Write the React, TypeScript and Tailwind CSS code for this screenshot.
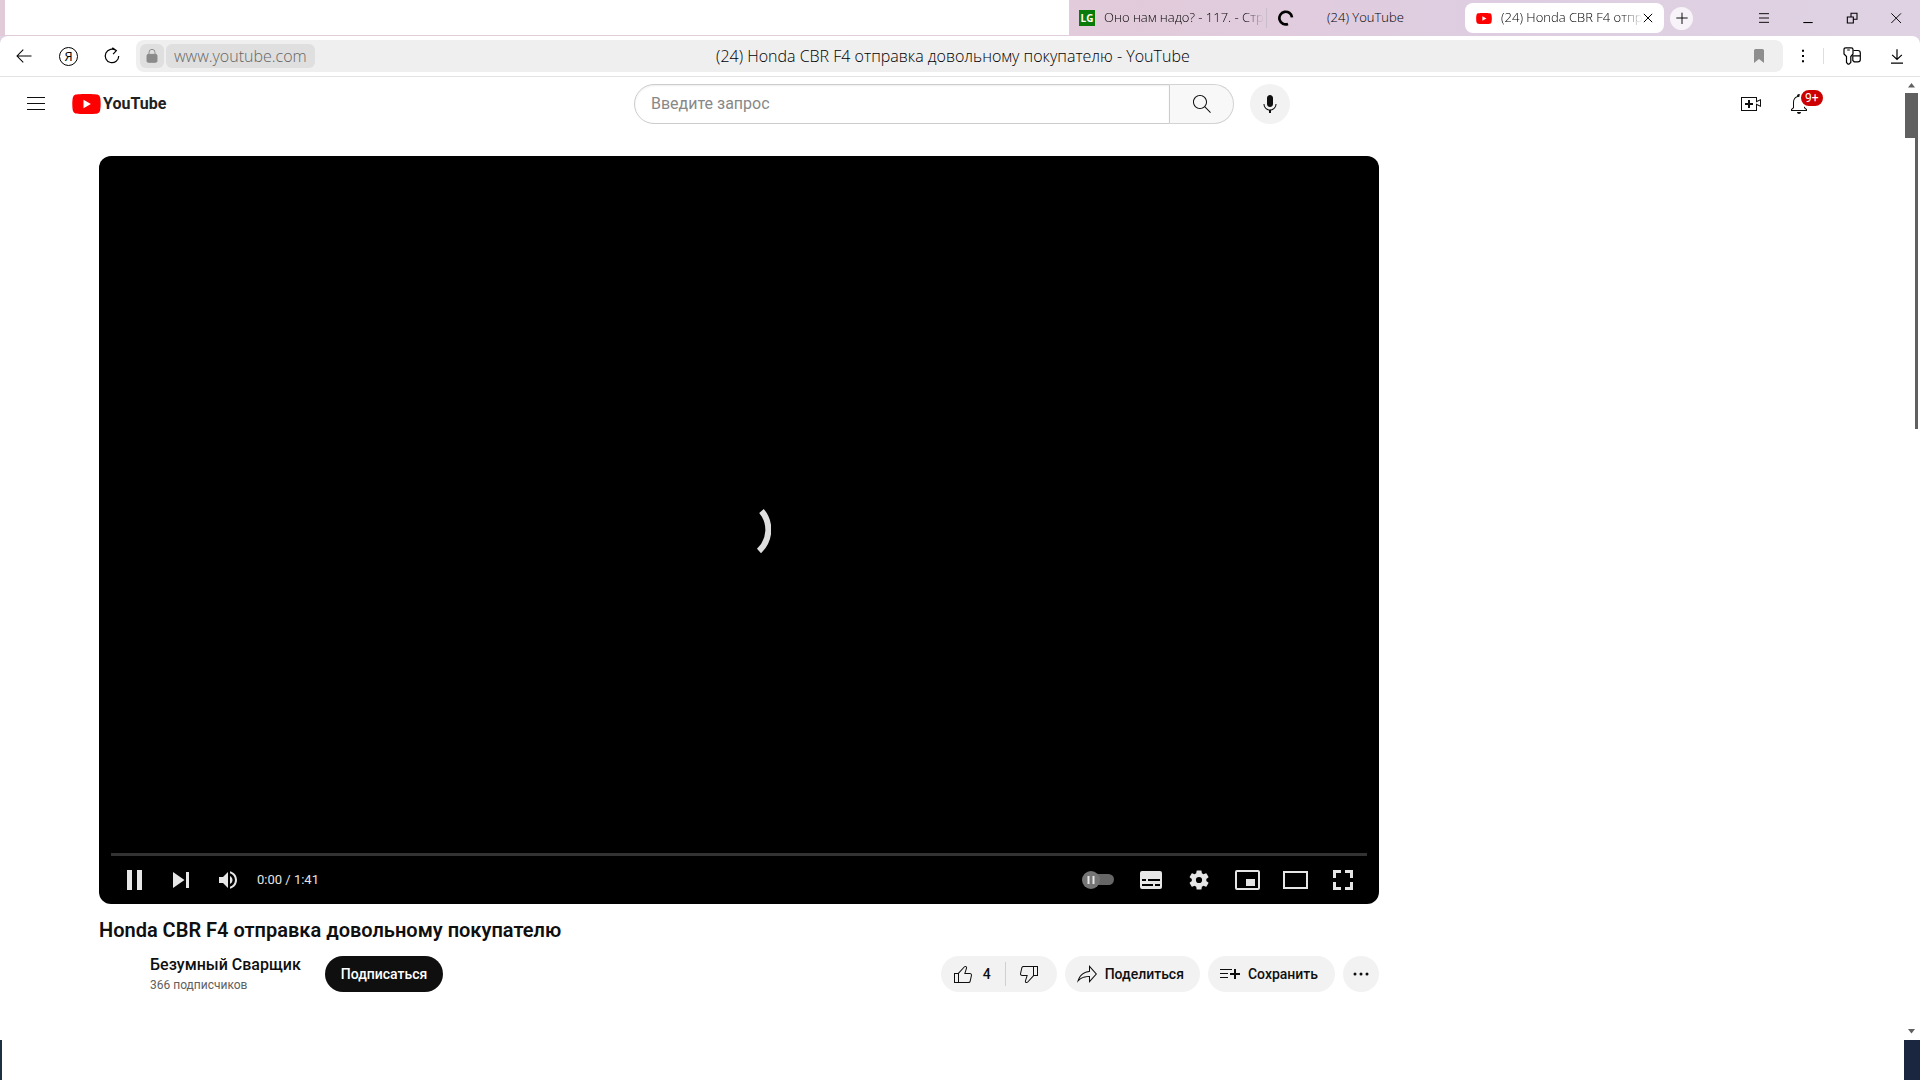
import React from "react";

const UI_FONT = "font-['Open_Sans','Noto_Sans',sans-serif] font-light";
const YT_FONT = "font-['Roboto','Liberation_Sans',sans-serif] font-normal";

const PATHS = {
  menu: "M21,6H3V5h18V6z M21,11H3v1h18V11z M21,17H3v1h18V17z",
  search:
    "M20.87,20.17l-5.59-5.59C16.35,13.35,17,11.75,17,10c0-3.87-3.13-7-7-7s-7,3.13-7,7s3.13,7,7,7c1.75,0,3.35-0.65,4.58-1.71l5.59,5.59L20.87,20.17z M10,16c-3.31,0-6-2.69-6-6s2.69-6,6-6s6,2.69,6,6S13.31,16,10,16z",
  mic: "M12 3C10.34 3 9 4.37 9 6.07V11.93C9 13.63 10.34 15 12 15C13.66 15 15 13.63 15 11.93V6.07C15 4.37 13.66 3 12 3ZM18.5 12H17.5C17.5 15.03 15.03 17.5 12 17.5C8.97 17.5 6.5 15.03 6.5 12H5.5C5.5 15.24 7.89 17.93 11 18.41V21H13V18.41C16.11 17.93 18.5 15.24 18.5 12Z",
  create:
    "M14,13h-3v3H9v-3H6v-2h3V8h2v3h3V13z M17,6H3v12h14v-6.39l4,1.83V8.56l-4,1.83V6 M18,5v3.83L22,7v8l-4-1.83V19H2V5H18L18,5z",
  bell: "M10,20h4c0,1.1-0.9,2-2,2S10,21.1,10,20z M20,17.35V19H4v-1.65l2-1.88v-5.15c0-2.92,1.56-5.22,4-5.98V3.96c0-1.42,1.49-2.5,2.99-1.76C13.64,2.52,14,3.23,14,3.96l0,0.39c2.44,0.75,4,3.06,4,5.98v5.15L20,17.35z M19,17.77l-2-1.88v-5.47c0-2.47-1.19-4.36-3.13-5.1c-1.26-0.53-2.64-0.5-3.84,0.03C8.15,6.11,7,7.99,7,10.42v5.47l-2,1.88V18h14V17.77z",
  like: "M18.77,11h-4.23l1.52-4.94C16.38,5.03,15.54,4,14.38,4c-0.58,0-1.14,0.24-1.52,0.65L7,11H3v10h4h1h9.43c1.06,0,1.98-0.67,2.19-1.61l1.34-6C21.23,12.15,20.18,11,18.77,11z M7,20H4v-8h3V20z M19.98,13.17l-1.34,6C18.54,19.65,18.03,20,17.43,20H8v-8.61l5.6-6.06C13.79,5.12,14.08,5,14.38,5c0.26,0,0.5,0.11,0.63,0.3c0.07,0.1,0.15,0.26,0.09,0.47l-1.52,4.94L13.18,12h1.35h4.23c0.41,0,0.8,0.17,1.03,0.46C19.92,12.61,20.05,12.86,19.98,13.17z",
  dislike:
    "M17,4h-1H6.57C5.5,4,4.59,4.67,4.38,5.61l-1.34,6C2.77,12.85,3.82,14,5.23,14h4.23l-1.52,4.94C7.62,19.97,8.46,21,9.62,21c0.58,0,1.14-0.24,1.52-0.65L17,14h4V4H17z M10.4,19.67C10.21,19.88,9.92,20,9.62,20c-0.26,0-0.5-0.11-0.63-0.3c-0.07-0.1-0.15-0.26-0.09-0.47l1.52-4.94l0.4-1.29H9.46H5.23c-0.41,0-0.8-0.17-1.03-0.46c-0.12-0.15-0.25-0.4-0.18-0.72l1.34-6C5.46,5.35,5.97,5,6.57,5H16v8.61L10.4,19.67z M20,13h-3V5h3V13z",
  share:
    "M15,5.63L20.66,12L15,18.37V15v-1h-1c-3.96,0-7.14,1-9.75,3.09c1.84-4.07,5.11-6.4,9.89-7.1L15,9.86V9V5.63 M14,3v6 C6.22,10.13,3.11,15.33,2,21c2.78-3.97,6.44-6,12-6v6l8-9L14,3L14,3z",
  save: "M22,13h-4v4h-2v-4h-4v-2h4V7h2v4h4V13z M14,7H2v1h12V7z M2,12h8v-1H2V12z M2,16h8v-1H2V16z",
  more: "M7.5,12a1.5,1.5 0 1 1-3,0a1.5,1.5 0 1 1 3,0z M13.5,12a1.5,1.5 0 1 1-3,0a1.5,1.5 0 1 1 3,0z M19.5,12a1.5,1.5 0 1 1-3,0a1.5,1.5 0 1 1 3,0z",
  pause: "M4,2h5v20H4z M14,2h5v20h-5z",
  next: "M4,4v16l11.5-8z M17,4h3v16h-3z",
  volume:
    "M3,9v6h4l5,5V4L7,9H3z M16.5,12c0-1.77-1.02-3.29-2.5-4.03v8.05c1.48-.73,2.5-2.25,2.5-4.02z M14,3.23v2.06c2.89.86,5,3.54,5,6.71s-2.11,5.85-5,6.71v2.06c4.01-.91,7-4.49,7-8.77s-2.99-7.86-7-8.77z",
  captions:
    "M3,3h18a2,2 0 0 1 2,2v14a2,2 0 0 1-2,2H3a2,2 0 0 1-2-2V5a2,2 0 0 1 2-2z M3,11v2h4v-2z M9,11v2h12v-2z M3,16v2h11v-2z M16,16v2h5v-2z",
  settings:
    "M19.94,13.06c.05-.34.08-.69.08-1.06s-.03-.72-.08-1.06l2.2-1.72a.5.5 0 0 0 .12-.66l-2.08-3.6a.52.52 0 0 0-.64-.22l-2.6,1.04a7.6,7.6 0 0 0-1.8-1.04L14.74,1.98A.52.52 0 0 0 14.22,1.6H9.9a.5.5 0 0 0-.5.44L9,4.74a7.8,7.8 0 0 0-1.8,1.04L4.6,4.74a.5.5 0 0 0-.64.22l-2.08,3.6a.5.5 0 0 0 .12.66l2.2,1.72a8,8 0 0 0 0,2.12L2,14.78a.5.5 0 0 0-.12.66l2.08,3.6c.14.24.4.32.64.22l2.6-1.04c.54.42,1.14.78,1.8,1.04l.4,2.7c.04.26.24.44.5.44h4.32c.26,0,.48-.18.5-.44l.4-2.7a7.6,7.6 0 0 0 1.8-1.04l2.6,1.04c.24.08.5,0,.64-.22l2.08-3.6a.5.5 0 0 0-.12-.66z M12,15.4a3.4,3.4 0 1 1 0-6.8a3.4,3.4 0 0 1 0,6.8z",
  fullscreen:
    "M2,2h8v3H5v5H2z M14,2h8v8h-3V5h-5z M2,14h3v5h5v3H2z M19,14h3v8h-8v-3h5z",
};

function Icon({ name, className = "size-6" }: { name: keyof typeof PATHS; className?: string }) {
  return (
    <svg viewBox="0 0 24 24" className={`${className} shrink-0 fill-current`} fillRule="evenodd" aria-hidden="true">
      <path d={PATHS[name]} />
    </svg>
  );
}

function PlayMark({ className }: { className: string }) {
  return (
    <svg viewBox="0 0 29 20" className={`${className} shrink-0`} preserveAspectRatio="none" aria-hidden="true">
      <path
        fill="#f00"
        d="M28 3.1A3.6 3.6 0 0 0 25.5.6C23.2 0 14.5 0 14.5 0S5.8 0 3.5.6A3.6 3.6 0 0 0 1 3.1C.3 5.4.3 10 .3 10s0 4.6.7 6.9a3.6 3.6 0 0 0 2.5 2.5c2.3.6 11 .6 11 .6s8.7 0 11-.6a3.6 3.6 0 0 0 2.5-2.5c.7-2.3.7-6.9.7-6.9s0-4.6-.7-6.9z"
      />
      <path fill="#fff" d="M11.5 14.3V5.7L18.9 10z" />
    </svg>
  );
}

function LineIcon({ className = "size-6", children }: { className?: string; children: React.ReactNode }) {
  return (
    <svg
      viewBox="0 0 24 24"
      className={`${className} shrink-0 fill-none stroke-current`}
      strokeWidth={1.4}
      aria-hidden="true"
    >
      {children}
    </svg>
  );
}

function IconButton({
  label,
  className,
  children,
}: {
  label: string;
  className: string;
  children: React.ReactNode;
}) {
  return (
    <button type="button" aria-label={label} className={`flex shrink-0 items-center justify-center ${className}`}>
      {children}
    </button>
  );
}

function TabStrip() {
  return (
    <div className="flex h-9 bg-linear-to-r from-[#e1cbd9] to-[#dfd3e3] pl-[5px] text-[13px]">
      <div className="mb-px min-w-0 flex-1 bg-white" />
      <div className="flex shrink-0 items-center bg-linear-to-r from-[#e2cbda] via-[#decde1] to-[#dfd3e3]">
        <button type="button" className="ml-[10px] flex w-[178px] items-center whitespace-nowrap">
          <span className="flex size-4 shrink-0 items-center justify-center bg-[#0a7a0a] text-[10px] font-bold text-white">
            LG
          </span>
          <span className="ml-[9px] mask-r-from-88% text-left">Оно нам надо? - 117. - Стр</span>
        </button>
        <div className="ml-[9px] h-5 w-px bg-[#c9bccb]" />
        <button type="button" className="flex w-[197px] items-center pl-[11px] text-left">
          <LineIcon className="size-4">
            <path d="M21 11A9.5 9.5 0 1 0 15 21" strokeWidth="4" />
          </LineIcon>
          <span className="ml-[33px]">(24) YouTube</span>
        </button>
        <div className="ml-px flex h-[30px] w-[199px] items-center rounded-lg bg-white pr-3 pl-[11px]">
          <PlayMark className="h-[11px] w-4" />
          <span className="ml-[9px] mask-r-from-85% whitespace-nowrap">(24) Honda CBR F4 отпр</span>
          <IconButton label="Закрыть вкладку" className="ml-auto size-[10px]">
            <LineIcon className="size-[10px]">
              <path d="M2 2l20 20M22 2L2 22" strokeWidth="2.4" />
            </LineIcon>
          </IconButton>
        </div>
        <IconButton label="Новая вкладка" className="ml-[6px] size-[23px] rounded-full bg-[#f7f3f8]">
          <LineIcon className="size-4">
            <path d="M12 4v17M3.5 12h17" />
          </LineIcon>
        </IconButton>
        <IconButton label="Меню" className="ml-[49px] h-9 w-11">
          <LineIcon className="size-4">
            <path d="M4.5 5.5h15M4.5 12h15M4.5 18.5h15" />
          </LineIcon>
        </IconButton>
        <IconButton label="Свернуть" className="h-9 w-11">
          <LineIcon className="size-4">
            <path d="M5 18.8h14" strokeWidth="1.6" />
          </LineIcon>
        </IconButton>
        <IconButton label="Окно" className="h-9 w-11">
          <LineIcon className="size-4">
            <path d="M5 10.5h9v9H5zM10.5 10.5V5h9v9H14" strokeWidth="1.6" />
          </LineIcon>
        </IconButton>
        <IconButton label="Закрыть" className="mr-[2px] h-9 w-11">
          <LineIcon className="size-4">
            <path d="M5 5l14.5 14.5M19.5 5L5 19.5" />
          </LineIcon>
        </IconButton>
      </div>
    </div>
  );
}

function AddressBar() {
  return (
    <div className="bg-[#dfd3e3]">
      <div className="flex h-[41px] items-center rounded-t-lg border-b border-[#e4e4e4] bg-white">
        <IconButton label="Назад" className="ml-3 size-6">
          <LineIcon className="size-[18px]">
            <path d="M22 12H3M11 3.5L2.7 12l8.3 8.5" />
          </LineIcon>
        </IconButton>
        <IconButton label="Яндекс" className="ml-[23px] size-[19px] rounded-full border border-black">
          <span className="text-[13px] leading-none font-normal">Я</span>
        </IconButton>
        <IconButton label="Обновить" className="ml-[22px] size-6">
          <LineIcon className="size-[18px]">
            <path d="M17.5 4.8A9 9 0 1 0 21 12M12.5 1l5.3 3.9-4.3 4.6" strokeWidth="1.6" />
          </LineIcon>
        </IconButton>
        <div className="ml-3 flex h-8 min-w-0 flex-1 items-center rounded-lg bg-[#efefef]">
          <IconButton label="Защищено" className="ml-1 size-6 rounded-md bg-[#dfdfdf] text-[#8a8a8a]">
            <LineIcon className="size-4">
              <rect x="4.5" y="9.5" width="15" height="12" rx="2" fill="currentColor" />
              <path d="M7.5 10V6.5a4.5 4.5 0 0 1 9 0V10" />
            </LineIcon>
          </IconButton>
          <button type="button" className="ml-[2px] h-6 rounded-md bg-[#dfdfdf] px-2 text-base leading-6 text-[#666]">
            www.youtube.com
          </button>
          <div className="min-w-0 flex-1 truncate pr-[156px] text-center text-base">
            (24) Honda CBR F4 отправка довольному покупателю - YouTube
          </div>
          <IconButton label="Добавить в закладки" className="mr-3 size-6 text-[#8e8e8e]">
            <svg viewBox="0 0 10 14" className="h-[14px] w-[10px] fill-current" aria-hidden="true">
              <path d="M0 1.5Q0 0 1.5 0h7Q10 0 10 1.5V14L5 10 0 14z" />
            </svg>
          </IconButton>
        </div>
        <IconButton label="Ещё" className="ml-2 size-6">
          <LineIcon className="size-4">
            <path d="M12 2.5v3M12 10.5v3M12 18.5v3" strokeWidth="3" />
          </LineIcon>
        </IconButton>
        <div className="ml-2 h-4 w-px bg-[#dedede]" />
        <IconButton label="Пароли" className="ml-4 size-6">
          <svg viewBox="0 0 18 18" className="size-[18px] fill-none stroke-current" strokeWidth="1.2" aria-hidden="true">
            <path d="M3.5 9.5L1 7V2.5Q1 .8 2.700.8H8.300Q10 .8 10 2.500V7L7.800 9.500V15.500L6 17.200H5L3.500 15.500zM4.200 3h2.600" />
            <path d="M10.500 3.500H15Q17.300 3.500 17.300 6V12.500Q17.300 14.800 15 14.800H11.200L9.800 13.500V8.800H17.300" />
          </svg>
        </IconButton>
        <IconButton label="Загрузки" className="mr-[11px] ml-[21px] size-6">
          <LineIcon className="size-[18px]">
            <path d="M12 3v13M5.5 10.5L12 16.5l6.5-6M4 21.5h16" strokeWidth="1.6" />
          </LineIcon>
        </IconButton>
      </div>
    </div>
  );
}

function Masthead() {
  return (
    <header className="flex h-[54px] items-center px-6">
      <div className="flex flex-1 items-center">
        <IconButton label="Гид" className="size-6">
          <Icon name="menu" />
        </IconButton>
        <a href="#" aria-label="YouTube" className="ml-6 flex items-center gap-[2px]">
          <PlayMark className="h-5 w-[29px]" />
          <span className="text-base leading-5 font-bold text-[#212121]">YouTube</span>
        </a>
      </div>
      <form className="ml-5 flex w-[656px] shrink-0 items-center" onSubmit={(event) => event.preventDefault()}>
        <input
          type="search"
          aria-label="Введите запрос"
          placeholder="Введите запрос"
          className="h-10 min-w-0 flex-1 rounded-l-full border border-[#ccc] px-4 pb-[2px] text-base shadow-[inset_0_1px_2px_#eee] outline-none placeholder:text-[#888]"
        />
        <IconButton label="Поиск" className="h-10 w-16 rounded-r-full border border-l-0 border-[#d3d3d3] bg-[#f8f8f8]">
          <Icon name="search" />
        </IconButton>
        <IconButton label="Голосовой поиск" className="ml-4 size-10 rounded-full bg-[#f2f2f2]">
          <Icon name="mic" />
        </IconButton>
      </form>
      <div className="flex flex-1 items-center justify-end">
        <IconButton label="Создать" className="size-6">
          <Icon name="create" />
        </IconButton>
        <button type="button" aria-label="Уведомления" className="relative mr-[69px] ml-6 size-6">
          <Icon name="bell" />
          <span className="absolute -top-1 left-3 h-5 rounded-full border-2 border-white bg-[#c00] px-1 text-xs leading-4 text-white">
            9+
          </span>
        </button>
      </div>
    </header>
  );
}

function Player() {
  return (
    <section className="flex aspect-[1280/748] w-full flex-col rounded-xl bg-black px-3 text-[#e6e6e6]">
      <div className="flex flex-1 items-center justify-center pt-[53px]">
        <svg viewBox="0 0 64 64" className="size-16 fill-none stroke-[#dedede]" aria-label="Загрузка">
          <path d="M54.5 12A29 29 0 0 1 52 52" strokeWidth="6" />
        </svg>
      </div>
      <div className="h-[3px] bg-[#333]" />
      <div className="flex h-12 items-center pl-px">
        <IconButton label="Пауза" className="size-[46px]">
          <Icon name="pause" />
        </IconButton>
        <IconButton label="Следующее" className="size-[46px]">
          <Icon name="next" />
        </IconButton>
        <IconButton label="Звук" className="size-12">
          <Icon name="volume" />
        </IconButton>
        <span className="ml-[5px] text-[13px]">0:00 / 1:41</span>
        <div className="ml-auto flex">
          <IconButton label="Автовоспроизведение" className="h-12 w-[58px]">
            <svg viewBox="0 0 32 18" className="h-[18px] w-8" aria-hidden="true">
              <rect x="6" y="3" width="26" height="11" rx="5.5" fill="#666" />
              <circle cx="9" cy="9" r="9" fill="#757575" />
              <path d="M5.5 5h2v8h-2zM10.5 5h2v8h-2z" fill="#e6e6e6" />
            </svg>
          </IconButton>
          <IconButton label="Субтитры" className="size-12">
            <Icon name="captions" />
          </IconButton>
          <IconButton label="Настройки" className="size-12">
            <Icon name="settings" className="size-[22px]" />
          </IconButton>
          <IconButton label="Мини-проигрыватель" className="size-12">
            <svg viewBox="0 0 26 20" className="h-5 w-[26px]" aria-hidden="true">
              <rect x="2" y="1" width="23" height="18" rx="1" fill="none" stroke="currentColor" strokeWidth="2" />
              <path d="M12 9h9v7h-9z" fill="currentColor" />
            </svg>
          </IconButton>
          <IconButton label="Широкий экран" className="size-12">
            <svg viewBox="0 0 26 20" className="h-5 w-[26px]" aria-hidden="true">
              <rect x="2" y="2" width="23" height="16" fill="none" stroke="currentColor" strokeWidth="2" />
            </svg>
          </IconButton>
          <IconButton label="Во весь экран" className="size-12">
            <Icon name="fullscreen" />
          </IconButton>
        </div>
      </div>
    </section>
  );
}

function VideoInfo() {
  const pill = "flex h-9 items-center rounded-full bg-[#f2f2f2] text-sm font-medium";
  return (
    <>
      <h1 className="mt-3 text-xl leading-7 font-semibold">Honda CBR F4 отправка довольному покупателю</h1>
      <div className="mt-3 flex h-9 items-center">
        <div className="ml-[51px] flex flex-col">
          <a href="#" className="text-base leading-[22px] font-medium">
            Безумный Сварщик
          </a>
          <span className="text-xs leading-[18px] text-[#606060]">366 подписчиков</span>
        </div>
        <button type="button" className="ml-6 h-9 rounded-full bg-[#0f0f0f] px-4 text-sm font-medium text-white">
          Подписаться
        </button>
        <div className="ml-auto flex gap-2">
          <div className={pill}>
            <button type="button" className="flex h-9 items-center gap-2 pr-[14px] pl-[10px]">
              <Icon name="like" />4
            </button>
            <span className="h-6 w-px bg-[#d0d0d0]" />
            <IconButton label="Не нравится" className="h-9 w-[51px] pr-1">
              <Icon name="dislike" />
            </IconButton>
          </div>
          <button type="button" className={`${pill} gap-[6px] pr-4 pl-[10px]`}>
            <Icon name="share" />
            Поделиться
          </button>
          <button type="button" className={`${pill} gap-[6px] pr-[17px] pl-[10px]`}>
            <Icon name="save" />
            Сохранить
          </button>
          <IconButton label="Другие действия" className="size-9 rounded-full bg-[#f2f2f2]">
            <Icon name="more" />
          </IconButton>
        </div>
      </div>
    </>
  );
}

function Scrollbar() {
  return (
    <div className="flex w-4 shrink-0 flex-col pl-px" aria-hidden="true">
      <svg viewBox="0 0 15 16" className="h-4 w-[15px] fill-[#606060]">
        <path d="M3 10.5L6.5 6l3.5 4.5z" />
      </svg>
      <div className="flex h-[336px] w-[13px] items-start bg-white">
        <div className="h-[45px] w-[10px] bg-[#606060]" />
        <div className="h-full w-[3px] bg-[#606060]" />
      </div>
      <svg viewBox="0 0 15 16" className="mt-auto h-4 w-[15px] fill-[#606060]">
        <path d="M3 5l3.5 4.5L10 5z" />
      </svg>
    </div>
  );
}

export default function App() {
  return (
    <div className={`flex min-h-screen flex-col bg-white text-black ${UI_FONT}`}>
      <TabStrip />
      <AddressBar />
      <div className="flex flex-1">
        <div className={`min-w-0 flex-1 text-[#0f0f0f] ${YT_FONT}`}>
          <Masthead />
          <main className="mx-auto max-w-[1706px] pt-[25px]">
            <div className="max-w-[1280px]">
              <Player />
              <VideoInfo />
            </div>
          </main>
        </div>
        <Scrollbar />
      </div>
      <div className="flex h-10 justify-between">
        <div className="w-[2px] bg-[#1c3142]" />
        <div className="w-4 bg-[#1a2640]" />
      </div>
    </div>
  );
}
